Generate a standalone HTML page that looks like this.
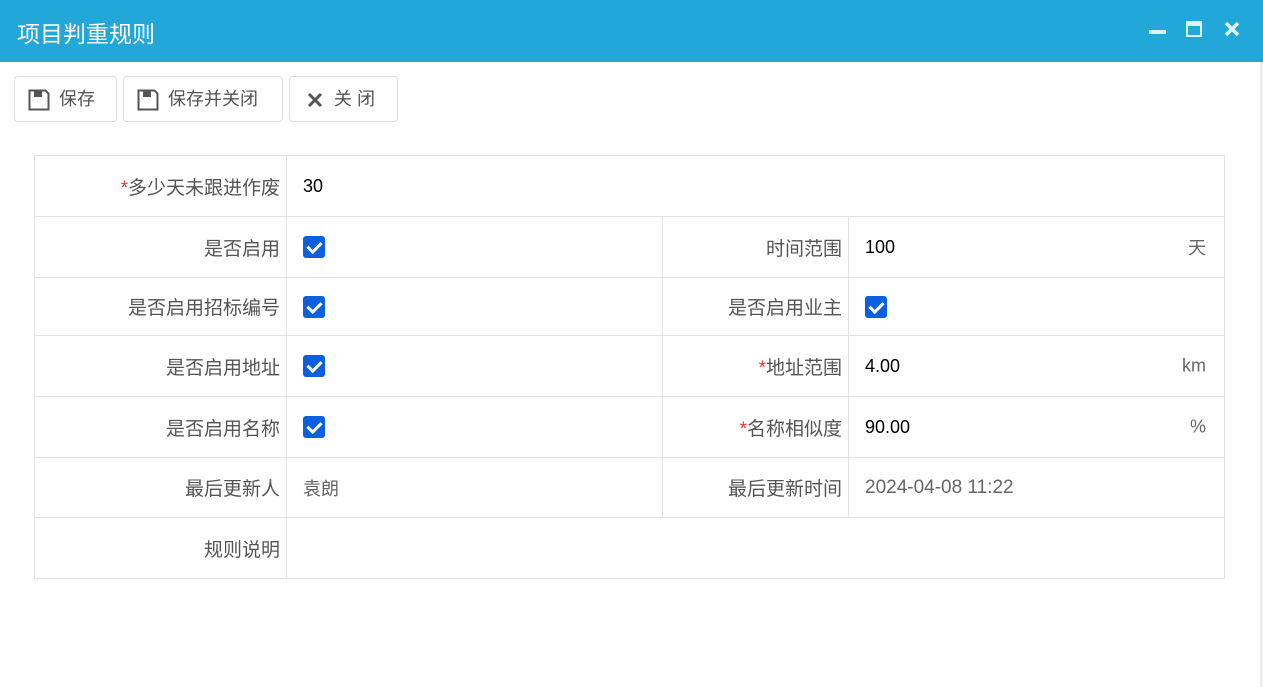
<!DOCTYPE html>
<html><head><meta charset="utf-8"><style>
*{margin:0;padding:0;box-sizing:border-box}
body{width:1263px;height:687px;background:#fff;font-family:"Liberation Sans","Noto Sans CJK SC",sans-serif;position:relative;overflow:hidden}
.hd{position:absolute;left:0;top:0;width:1263px;height:62px;background:#21a7d8}
.hd .t{position:absolute;left:17px;top:15px;color:#fff;font-size:23px}
.sb{position:absolute;left:1260px;top:62px;width:3px;height:625px;background:#eee}
.btn{position:absolute;top:76px;height:46px;border:1px solid #ddd;border-radius:4px;font-size:18px;color:#555;line-height:44px;background:#fff}
.btn svg{position:absolute;top:12px;left:13px}
.btn span{position:absolute;top:0}
table{position:absolute;left:34px;top:155px;border-collapse:collapse;font-size:18px}
td{border:1px solid #e3e3e3;padding:0;vertical-align:middle}
td.l{text-align:right;color:#555;padding-right:6px;font-size:19px}
td.v{padding-left:16px;color:#000;position:relative}
.r{color:#e33}
.cb{display:inline-block;width:22px;height:22px;background:#0b5fe0;border-radius:3px;vertical-align:middle;position:relative}
.cb:after{content:"";position:absolute;left:7px;top:3px;width:6px;height:11px;border:solid #fff;border-width:0 3px 3px 0;transform:rotate(45deg)}
.u{position:absolute;right:18px;top:50%;transform:translateY(-50%);color:#666}
</style></head><body>
<div class="hd"><div class="t">项目判重规则</div>
<svg style="position:absolute;left:1148px;top:20px" width="100" height="22">
<rect x="1" y="10" width="17" height="4" fill="#e0f3fa"/>
<rect x="39" y="2" width="14" height="14" fill="none" stroke="#e0f3fa" stroke-width="2"/><rect x="39" y="2" width="14" height="4" fill="#e0f3fa"/>
<path d="M78 3 L90 15 M90 3 L78 15" stroke="#e0f3fa" stroke-width="3.5"/></svg></div>
<div class="sb"></div>
<div class="btn" style="left:14px;width:103px"><svg width="22" height="22" viewBox="0 0 22 22"><path d="M1.5 1.5h16l3 3v16h-19z" fill="none" stroke="#555" stroke-width="2"/><rect x="6" y="2" width="8" height="6" fill="#555"/></svg><span style="left:44px">保存</span></div>
<div class="btn" style="left:123px;width:160px"><svg width="22" height="22" viewBox="0 0 22 22"><path d="M1.5 1.5h16l3 3v16h-19z" fill="none" stroke="#555" stroke-width="2"/><rect x="6" y="2" width="8" height="6" fill="#555"/></svg><span style="left:44px">保存并关闭</span></div>
<div class="btn" style="left:289px;width:109px"><svg style="left:17px;top:15px" width="16" height="16"><path d="M2 2L14 14M14 2L2 14" stroke="#555" stroke-width="3"/></svg><span style="left:44px">关 闭</span></div>
<table>
<tr style="height:61px"><td class="l" style="width:252px"><span class="r">*</span>多少天未跟进作废</td><td class="v" colspan="3">30</td></tr>
<tr style="height:61px"><td class="l">是否启用</td><td class="v" style="width:376px"><span class="cb"></span></td><td class="l" style="width:186px">时间范围</td><td class="v" style="width:376px">100<span class="u">天</span></td></tr>
<tr style="height:58px"><td class="l">是否启用招标编号</td><td class="v"><span class="cb"></span></td><td class="l">是否启用业主</td><td class="v"><span class="cb"></span></td></tr>
<tr style="height:61px"><td class="l">是否启用地址</td><td class="v"><span class="cb"></span></td><td class="l"><span class="r">*</span>地址范围</td><td class="v">4.00<span class="u">km</span></td></tr>
<tr style="height:61px"><td class="l">是否启用名称</td><td class="v"><span class="cb"></span></td><td class="l"><span class="r">*</span>名称相似度</td><td class="v">90.00<span class="u">%</span></td></tr>
<tr style="height:60px"><td class="l">最后更新人</td><td class="v" style="color:#666">袁朗</td><td class="l">最后更新时间</td><td class="v" style="color:#666;font-size:19px">2024-04-08 11:22</td></tr>
<tr style="height:61px"><td class="l">规则说明</td><td class="v" colspan="3"></td></tr>
</table>
</body></html>
